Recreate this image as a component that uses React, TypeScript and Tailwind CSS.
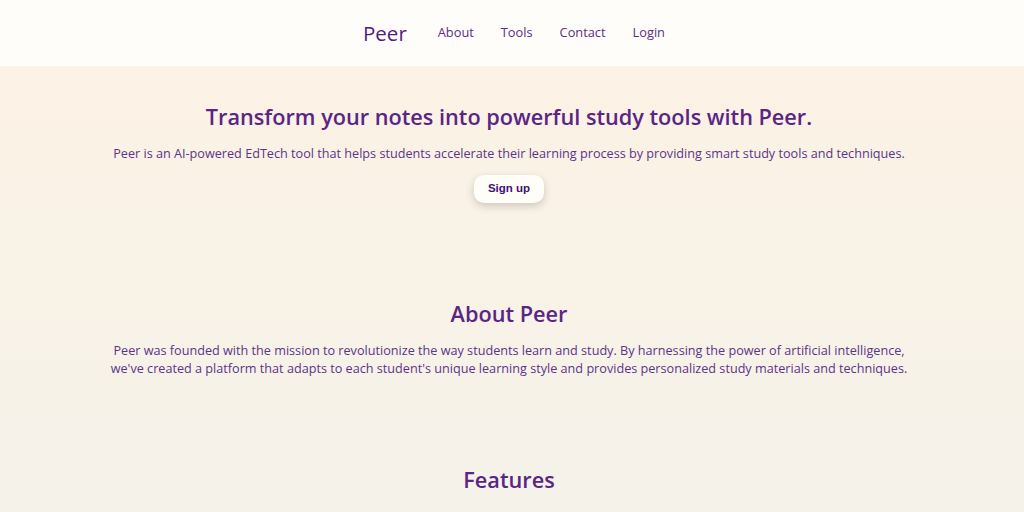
export default function App() {
  return (
    <div className="min-h-screen bg-gradient-to-b from-[#fdf2e4] to-[#f4f2ea] font-['Open_Sans',sans-serif] text-[#5a2a87]">
      <header className="h-[66px] bg-[#fffdf9] flex items-center justify-center pl-[4px]">
        <nav className="flex items-center gap-[27px]">
          <span className="text-[20.5px] font-medium text-[#4f1c82] mr-[4px]">Peer</span>
          <a className="text-[12.8px] text-[#5b2e8a]">About</a>
          <a className="text-[12.8px] text-[#5b2e8a]">Tools</a>
          <a className="text-[12.8px] text-[#5b2e8a]">Contact</a>
          <a className="text-[12.8px] text-[#5b2e8a]">Login</a>
        </nav>
      </header>

      <main className="pr-[6px]">
        <section className="flex flex-col items-center pt-[35px] text-center">
          <h1 className="text-[21.7px] font-semibold leading-[32px] text-[#5a2585]">
            Transform your notes into powerful study tools with Peer.
          </h1>
          <p className="mt-[11px] text-[12.65px] leading-[18px] text-[#5b3488]">
            Peer is an AI-powered EdTech tool that helps students accelerate their learning process by providing smart study tools and techniques.
          </p>
          <button className="mt-[13px] h-[28px] w-[70px] rounded-[10px] bg-[#fffdf8] font-['Liberation_Sans',sans-serif] text-[11.5px] font-bold text-[#3f0f78] shadow-[0_3px_8px_rgba(0,0,0,0.18)]">
            Sign up
          </button>
        </section>

        <section className="flex flex-col items-center pt-[95px] text-center">
          <h2 className="text-[21.7px] font-semibold leading-[32px] text-[#5a2585]">About Peer</h2>
          <p className="mt-[11px] max-w-[812px] text-[12.65px] leading-[18px] text-[#5b3488]">
            Peer was founded with the mission to revolutionize the way students learn and study. By harnessing the power of artificial intelligence, we've created a platform that adapts to each student's unique learning style and provides personalized study materials and techniques.
          </p>
        </section>

        <section className="flex flex-col items-center pt-[87px] pb-16 text-center">
          <h2 className="text-[21.7px] font-semibold leading-[32px] text-[#5a2585]">Features</h2>
        </section>
      </main>
    </div>
  );
}
